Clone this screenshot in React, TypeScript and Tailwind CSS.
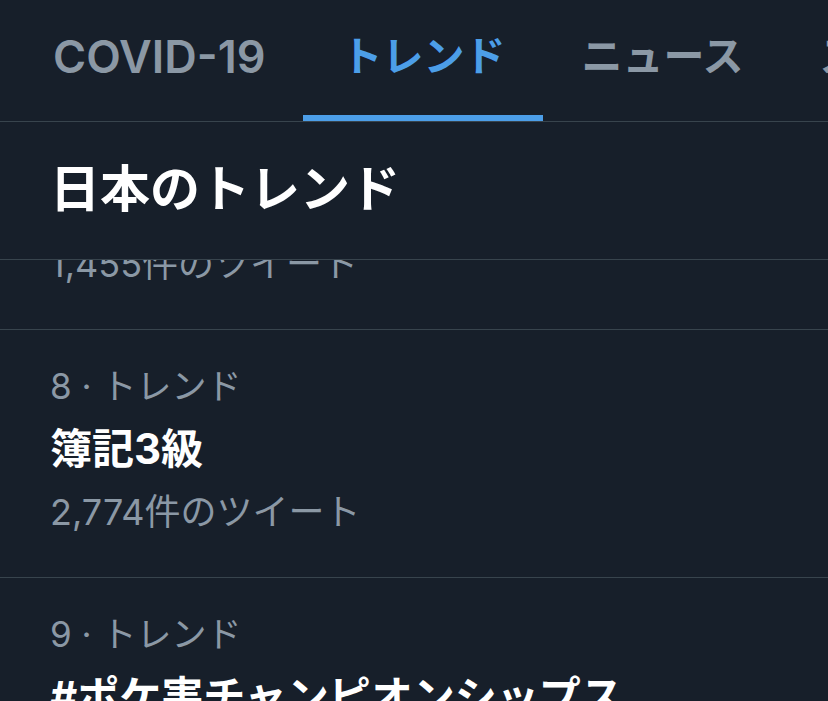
const tabs = [
  { label: "COVID-19", active: false, size: "text-[45px]" },
  { label: "トレンド", active: true, size: "text-[41px]" },
  { label: "ニュース", active: false, size: "text-[41px]" },
  { label: "スポーツ", active: false, size: "text-[41px]" },
];

const font = "font-['Inter','Noto_Sans_CJK_JP',sans-serif]";

function TrendRow({ rank, title, count }: { rank: number; title: string; count: string }) {
  return (
    <div className="border-b border-[#38444d] px-[50px] pt-[32px] pb-[41px]">
      <p className="text-[35px] leading-[48px] text-[#8b98a5]">{rank} · トレンド</p>
      <p className="text-[42px] leading-[78px] font-bold text-white whitespace-nowrap">{title}</p>
      <p className="text-[36px] leading-[48px] text-[#8b98a5]">{count}件のツイート</p>
    </div>
  );
}

export default function App() {
  return (
    <div className={`w-[828px] h-[701px] overflow-hidden bg-[#171f2a] ${font}`}>
      <div className="flex h-[122px] border-b border-[#38444d] pl-[15px] whitespace-nowrap">
        {tabs.map((t) => (
          <div key={t.label} className="relative flex items-center px-[38px] pb-[8px]">
            <span className={`${t.size} font-semibold ${t.active ? "text-[#4c9ee8]" : "text-[#8b98a5]"}`}>
              {t.label}
            </span>
            {t.active && <div className="absolute bottom-0 left-0 right-0 h-[6px] bg-[#4c9ee8]" />}
          </div>
        ))}
      </div>

      <div className="flex h-[138px] items-center border-b border-[#38444d] px-[50px] pb-[4px]">
        <h1 className="text-[50px] leading-none font-bold text-white">日本のトレンド</h1>
      </div>

      <div className="flex h-[70px] flex-col justify-end overflow-hidden border-b border-[#38444d] px-[50px] pb-[41px]">
        <p className="text-[36px] leading-[48px] text-[#8b98a5]">1,455件のツイート</p>
      </div>

      <TrendRow rank={8} title="簿記3級" count="2,774" />
      <TrendRow rank={9} title="#ポケ害チャンピオンシップス" count="1,980" />
    </div>
  );
}
